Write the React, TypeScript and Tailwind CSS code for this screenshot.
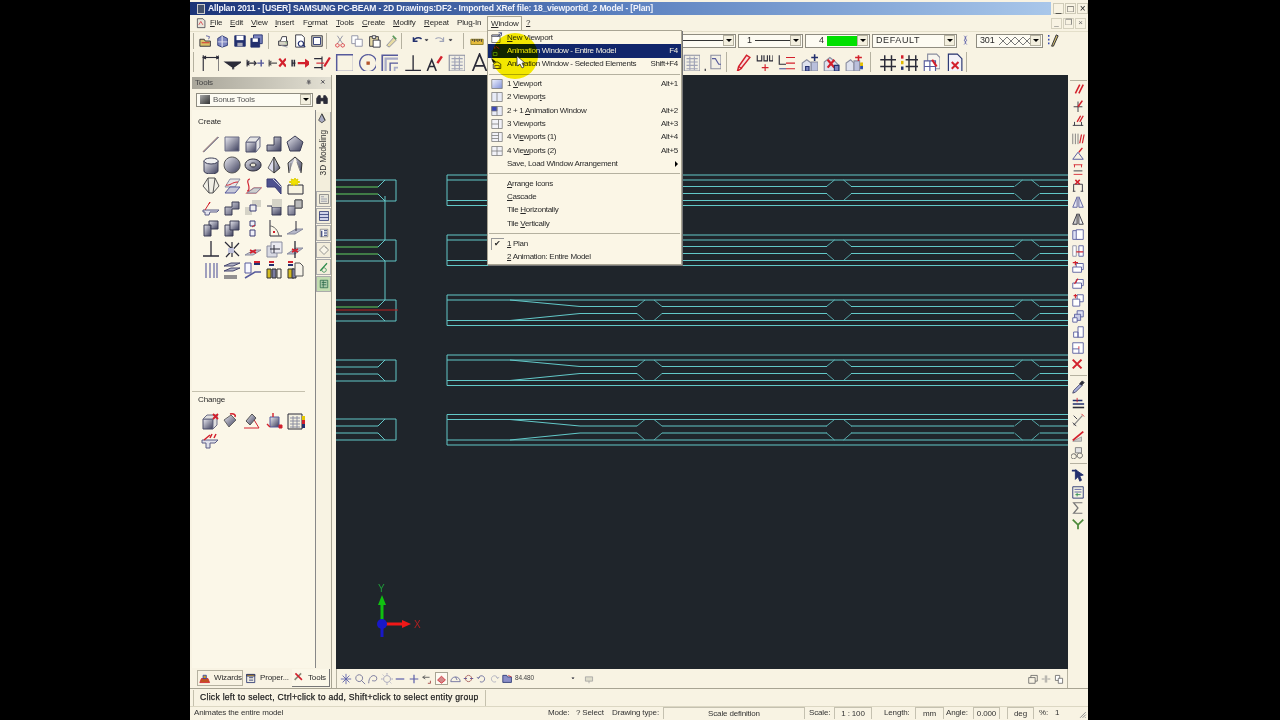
import React from "react";

type P = [string, string?, string?, number?];
const K = "#2b2b38", B = "#565a9c", R = "#d3202c", G = "#8a8da0", Y = "#d8c36a", N = "#23306e";
const D = "url(#sh)";

function Ic({ p, s = 16, v = 16 }: { p: P[]; s?: number; v?: number }) {
  return (
    <svg width={s} height={s} viewBox={`0 0 ${v} ${v}`} className="shrink-0">
      {p.map((x, i) => (
        <path key={i} d={x[0]} stroke={x[1] ?? K} fill={x[2] ?? "none"} strokeWidth={x[3] ?? 1} />
      ))}
    </svg>
  );
}

function U({ s }: { s: string }) {
  const i = s.indexOf("&");
  if (i < 0) return <>{s}</>;
  return (
    <>
      {s.slice(0, i)}
      <span className="underline">{s[i + 1]}</span>
      {s.slice(i + 2)}
    </>
  );
}

const tb1a: P[][] = [
  [["M1 6h5l1 2h6v6H1z", K, Y], ["M8 2l4 1-1 3", B], ["M3 10h9", R]],
  [["M2 5l5-3 6 3v8l-6 2-5-2z", N, "#7e86c0"], ["M7 2v13", "#fff"], ["M2 9h11", "#dde"]],
  [["M2 2h12v12H2z", N, N], ["M4 2h8v5H4z", "none", "#fff"], ["M5 10h6v4H5z", "none", "#aab"]],
  [["M4 1h10v10H4z", N, "#7e86c0"], ["M1 5h10v10H1z", N, N], ["M3 5h6v4H3z", "none", "#fff"]],
];
const tb1b: P[][] = [
  [["M3 8h10v5H3z", K, "#d9d6c8"], ["M5 8l2-5h5v5", K, "#fff"], ["M6 13l7 2", G], ["M11 10h1", "#3a3"]],
  [["M3 1h7l3 3v11H3z", K, "#fff"], ["M9 8a3 3 0 1 0 .1 0M11 12l3 3", N, "none", 1.4]],
  [["M2 2h12v12H2z", K, "#d9d6c8"], ["M4 4h8v8H4z", N, "#fff"]],
];
const tb1c: P[][] = [
  [["M11 2L5 11M5 2l6 9", G], ["M5 11a2 2 0 1 0 .1 0M11 11a2 2 0 1 0 .1 0", R]],
  [["M2 2h7v9H2z", G, "#fff"], ["M6 6h8v8H6z", G, "#fff"]],
  [["M3 3h10v11H3z", K, "#e6d9a8"], ["M6 2h4v3H6z", K, "#fff"], ["M7 7h8v8H7z", K, "#fff"]],
  [["M3 13l8-9 3 3-8 8z", G, "#e7dba2"], ["M10 2l4 4", "#5a9a5a", "none", 2]],
];
const undo: P[] = [["M3 9a6 5 0 0 1 10-3M3 4v5h5", N, "none", 1.8]];
const redo: P[] = [["M13 9a6 5 0 0 0-10-3M13 4v5H8", "#a0a4b8", "none", 1.4]];
const arrow: P[] = [["M2 6h5l-2.5 3z", K, K]];
const ruler: P[] = [["M1 6h14v6H1z", "#8c7a1f", "#e5bb3c"], ["M3 6v2M5 6v3M7 6v2M9 6v3M11 6v2M13 6v3", K]];

const t2: P[][] = [
  [["M2 2v15M16 2v15", K], ["M2 4h14", K], ["M2 4l2-1v2zM16 4l-2-1v2z", K, K]],
  [["M2 8h14l-7 5z", K, K], ["M8 14h2", K]],
  [["M1 6v6M1 9h8M3 7l-2 2 2 2M7 7l2 2-2 2", K], ["M10 9h7M13.5 6v6", B, "none", 1.3]],
  [["M1 6v6M1 9h7M3 7l-2 2 2 2", "#555"], ["M10 5l6 7M16 5l-6 7", R, "none", 2]],
  [["M1 6v6M3 6v6M1 9h3", K, "none", 1.3], ["M6 9h9", R, "none", 2], ["M13 6l4 3-4 3z", R, R]],
  [["M1 5h7M1 13h7M8 3v12", K], ["M10 12l5-8", R, "none", 2], ["M3 9h7", R]],
  [["M1.5 1.5h15v15h-15z", B, "none", 1.3]],
  [["M9 1.5a7.5 7.5 0 1 0 .1 0", B, "none", 1.2], ["M8 8h2v2H8z", "#b4552c", "#b4552c"]],
  [["M2 17V2h14", B, "none", 1.5], ["M5 17V5h11", "#a8abc8", "none", 2], ["M9 17V9h7", B, "none", 1.2], ["M13 17v-4h3", "#a8abc8", "none", 1.5]],
  [["M9 2v13M2 15.5h14", K, "none", 1.2]],
  [["M2 16L6 6l4 10M3.5 12h5", K, "none", 1.4], ["M11 9l4-6", R, "none", 2.2]],
  [["M2 2h14v14H2z", G, "#f2efe4"], ["M4 5h10M4 8h10M4 11h10M4 14h10M7 3v12M11 3v12", "#a0a3b6"]],
];
const bigA: P[] = [["M2 17L8.5 1 15 17M4.5 11.5h8", K, "none", 1.5]];
const t2b: P[][] = [
  [["M2 2h14v14H2z", G, "#f2efe4"], ["M4 5h10M4 8h10M4 11h10M4 14h10M7 3v12M11 3v12", "#a0a3b6"]],
  [["M7 2h9v12H7z", G, "#f2efe4"], ["M8 5h3l3 5h2", B], ["M2 14v3h3", K]],
];
const t2c: P[][] = [
  [["M4 16l1-4 7-10 3 2-8 10z", R, "#f7dede", 1.3], ["M5 12l3 2", R]],
  [["M2 2v5h4V2M8 2v5h3V2M13 2v5h3V2", K], ["M9 10v6M6 13h6", R]],
  [["M2 2v8h6", K], ["M8 4h8M8 9h8M8 14h8", R], ["M2 14h6", B]],
  [["M2 16V9l4-3 4 3v7z", G, "#dfe2ee"], ["M5 12h3v4H5z", N, "#7e86c0"], ["M10 16V8h6v8z", G, "#b9bfdc"], ["M10 4h6M13 1v6", N, "none", 1.4]],
  [["M2 16V8l5-4 5 4 3 3v5z", G, "#dfe2ee"], ["M5 6l6 7M11 6l-6 7", R, "none", 2], ["M11 11h4v5h-4z", N, "#7e86c0"]],
  [["M1 16V9l4-3 3 3v7z", G, "#dfe2ee"], ["M8 16V7h5v9z", G, "#b9bfdc"], ["M12 2v5M9 4h6", R, "none", 1.4], ["M14 9h3v2h-3z", "#d8b400", "#f0d000"], ["M14 12h3v2h-3z", "#2a4ab0", "#2a4ab0"]],
];
const t2d: P[][] = [
  [["M6 2v14M12 2v14M2 6h14M2 12h14", K, "none", 1.3]],
  [["M8 2v14M14 2v14M5 6h13M5 12h13", K, "none", 1.3], ["M2 2v3", R, "none", 2.2], ["M2 7v3", "#e0b800", "none", 2.2], ["M2 12v3", N, "none", 2.2]],
  [["M5 1h8l3 3v10H5z", G, "#f7f5ee"], ["M2 7h10v10H2z", B, "#fff"], ["M7 7v10M2 12h10", B], ["M9 6l4 6", R, "none", 2]],
  [["M3 1h8l4 4v12H3z", N, "#f3f2f8"], ["M6 8l6 6M12 8l-6 6", R, "none", 1.8]],
];

const grid: P[][] = [
  [["M1 17L16 2", "#a08888", "none", 1.4], ["M2 17L17 2", G, "none", 1]],
  [["M2 2h14v14H2z", "#6a6c85", D]],
  [["M2 7h10v10H2z", "#4a4c68", D], ["M2 7l4-5h10l-4 5zM12 7l4-5v10l-4 5z", "#6a6c85", "#e6e6e6"]],
  [["M2 10h7V2h7v14H2z", "#3b3d55", D]],
  [["M9 1l8 6-3 9H4L1 7z", "#3b3d55", D]],
  [["M2 5v10a7 3 0 0 0 14 0V5z", "#3b3d55", D], ["M9 2a7 3 0 1 0 .1 0", "#3b3d55", "#f0f0f0"]],
  [["M9 1a8 8 0 1 0 .1 0", "#555", D]],
  [["M9 3a8 6 0 1 0 .1 0", "#2b2b38", D], ["M9 7a3 2 0 1 0 .1 0", "#2b2b38", "#e8e4d4"]],
  [["M9 1L3 12l6 5z", "#666", "#dde"], ["M9 1l6 11-6 5z", "#333", D]],
  [["M9 1l7 6-1 10M9 1L2 7l1 10", "#333", D], ["M5 7l-1 8M11 6l3 9", "#888"]],
  [["M6 1h7l4 8-6 7H7L1 9z", "#555", "#f0efe6"], ["M6 1L7 16M13 1l-2 15", "#555", "#aaa"]],
  [["M2 10l5-8h10l-5 8z", G, "#e6e6e6"], ["M2 16l5-6h10l-5 6z", B, "#c6c8d8"], ["M3 8c4 1 6-3 12-3", R]],
  [["M3 14c3 0 2-5 1-8s1-4 2-4M3 16l7-5h7l-5 5z", R, "#e5e5e5", 1.1], ["M3 16l7-5h7l-5 5z", G, "#cfcfcf"]],
  [["M2 2h8l6 7v8l-6-7H2z", "#3b3d75", "#4e5290"], ["M8 2l8 8", "#cfd0e0"]],
  [["M2 8h15v9H2z", K, "#f7f3e1"], ["M9 1l1 2 2-1-1 2 3 1-3 1 1 2-3-1-1 2-1-2-2 1 1-2-3-1 3-1-1-2 3 1z", "#e0d000", "#f2e300"]],
  [["M1 12h16l-2 2H8l-1 3H3v-3H1z", "#5a5c85", "#e5e5ee"], ["M3 12l5-8", R], ["M8 4l-1 2", R]],
  [["M2 9h7V4h7v7H9v6H2z", "#3b3d55", D]],
  [["M1 9h7v8H1zM8 2h9v7H8z", "none", "#d5d3c7"], ["M6 7h6v6H6z", "#3b3d75", "#eee"]],
  [["M2 8h5v9h9V9H7", "#3b3d55", D], ["M7 1h10v8H7z", "none", "#d5d3c7"]],
  [["M2 8h7V2h7v8H9v7H2z", "#3b3d55", D], ["M9 2h7v8H9z", "#555", "#bbb"]],
  [["M2 6h7v11H2z", "#3b3d55", D], ["M7 2h9v8H9v-4H7z", "#3b3d55", D]],
  [["M2 6h8v11H2z", "#3b3d55", D], ["M7 2h9v9H7z", "#3b3d55", D]],
  [["M6 2h5v5H6zM6 11h5v6H6z", "#3b3d75", "#f0f0f8"], ["M8 8l3-2", R]],
  [["M5 1v16h12", K], ["M5 7c4 0 8 4 9 10", "#666"], ["M8 13h2", R, "none", 2]],
  [["M1 15l9-5h7l-8 5z", G, "#b5b7c8"], ["M10 2v10", K]],
  [["M9 1v15M1 16h16", K, "none", 1.3]],
  [["M2 2l14 14M16 3L3 17M9 2v15", K, "none", 1.2], ["M5 8h6v5H5z", "none", "#c0c2dc"]],
  [["M1 15l9-5h7l-8 5z", G, "#c8c8d0"], ["M6 10l6 3M6 13l6-3", R, "none", 1.8]],
  [["M2 6h10v11H2z", G, "#d8d9e2"], ["M6 2h11v11H6z", G, "#eaeaf0"], ["M9 5v8M5 9h10", K]],
  [["M1 14l9-6h7l-8 6z", G, "#b5b7c8"], ["M9 1v17", K, "none", 1.3], ["M6 9l6 3M6 12l6-3", R, "none", 1.6]],
  [["M4 2v15M8 2v15M12 2v15M15 2v15", B, "none", 1.1]],
  [["M1 5l7-3h9l-7 3zM1 10l7-3h9l-7 3z", "#44446c", "#b5b7c8"], ["M1 15h13", K], ["M1 17h13", K]],
  [["M1 2h6v10H1z", B, "#f8f8ff"], ["M1 17l10-6h6", B, "none", 1.5], ["M10 1h6", R, "none", 2], ["M10 3h6", N, "none", 2]],
  [["M2 8h4v9H2z", "#333", "#d4bc20"], ["M7 8h4v9H7z", "#333", "#7a7ca0"], ["M12 8h4v9h-4z", "#333", "#f6f3e8"], ["M4 1h5", R, "none", 2], ["M4 4h5", N, "none", 2]],
  [["M2 8h6v9H2z", "#333", "#d4bc20"], ["M6 8h4v9H6z", "#333", "#7a7ca0"], ["M9 2h5l3 3v10H9z", "#555", "#f6f3e8"], ["M2 1h5", R, "none", 2], ["M2 4h5", N, "none", 2]],
];
const change: P[][] = [
  [["M2 7h10v10H2z", "#4a4c68", D], ["M2 7l4-4h10l-4 4zM12 7l4-4v10l-4 4z", "#6a6c85", "#dedede"], ["M12 2l5 5M17 2l-5 5", R, "none", 1.8]],
  [["M3 8l7-5 5 5-7 7z", "#666", D], ["M9 2c4-1 6 1 5 3", R, "none", 1.6]],
  [["M1 16h15L10 6", R], ["M3 9l6-7 4 4-6 7z", "#555", D]],
  [["M5 5h9v10H5z", B, D], ["M8 1v4M2 12l3 3", R, "none", 1.4], ["M14 13h3v3h-3z", R, R]],
  [["M1 2h14v15H1z", K, "#f3f0e0"], ["M3 6h10M3 9h10M3 12h10M3 15h10M6 4v12M10 4v12", G], ["M15 4h3v4h-3z", "none", "#e6c800"], ["M15 8h3v4h-3z", "none", R], ["M15 12h3v4h-3z", "none", N]],
  [["M1 8h16l-3 3H9v5H5v-5H1z", "#5a5c85", "#dfe0ea"], ["M3 8l6-5M11 2l-2 4M15 2l-2 4", R, "none", 1.5]],
];
const rightIcons: P[][] = [
  [["M5 13l5-10", R, "none", 1.8], ["M9 13l5-10", R, "none", 1.8]],
  [["M3 10h10M8 4v12", K], ["M8 10l5-7", R, "none", 1.8]],
  [["M2 13h12M4 13V9M12 13V9", K], ["M7 9l4-7M10 9l4-7", R, "none", 1.5]],
  [["M2 3v12M5 3v12M8 3v12", "#777"], ["M10 14l2-10M13 14l2-10", R, "none", 1.4]],
  [["M2 14h12L8 6z", B, "none", 1.1], ["M9 6l4-5", R, "none", 1.6]],
  [["M3 2h10M3 13h10M4 2v3M12 2v3", R], ["M3 9h10", K]],
  [["M3 14V6h10v8M2 14h3M11 14h3", K], ["M5 1l5 5M10 1L5 6", R, "none", 1.8]],
  [["M7 2L2 14h5zM9 2l5 12H9z", B, "#e8e8f2"]],
  [["M7 2L2 14h5z", K, "#ccc"], ["M9 2l5 12H9z", K, "#f4f4f4"]],
  [["M2 3h8v10H2z", B, "#dfe2f4"], ["M6 2h8v11H6z", B, "#fff"]],
  [["M2 2h4v12H2z", G, "#fff"], ["M9 2h5v12H9z", B, "#fff"], ["M6 9h8", R, "none", 1.4]],
  [["M6 4h8v7H6z", B, "#fff"], ["M2 8h10v6H2z", B, "#fff"], ["M5 1v5M2 3h6", R, "none", 1.3]],
  [["M6 4h8v7H6z", B, "#fff"], ["M2 8h10v6H2z", B, "#fff"], ["M4 9l4-6", R, "none", 1.3]],
  [["M7 2h7v8H7z", B, "#fff"], ["M2 7h8v8H2z", B, "#fff"], ["M5 1v5M3 3h4", R, "none", 1.2]],
  [["M7 2h7v7H7z", B, "#dfe2f4"], ["M4 6h7v7H4z", B, "#c7cbe6"], ["M2 10h5v5H2z", B, "#fff"]],
  [["M3 8h5v6H3zM8 2h6v12H8z", B, "#fff"]],
  [["M2 2h12v12H2z", B, "#fff"], ["M2 9h7v5", B], ["M9 6v3", R]],
  [["M2 3l10 10M12 3L2 13", R, "none", 2.4]],
  [["M2 15l3-1 8-8-2-2-8 8z", "#446", "#a9b0dc"], ["M10 4l3-3 2 2-3 3z", K, K]],
  [["M2 4h11M2 8h13", N, "none", 1.8], ["M2 12h13", K, "none", 1.8], ["M7 1v5", R]],
  [["M3 14L13 3", "#888", "none", 1.3], ["M2 11l4 4M3 3l4 4", K], ["M12 1l3 3", R]],
  [["M2 14h10V9z", "#999", "#cfcfcf"], ["M2 13L14 3", R, "none", 2.2]],
  [["M3 10a3 3 0 1 0 .1 0M10 9a3 3 0 1 0 .1 0", "#555"], ["M5 3h7v6H5z", "#777", "#e3e3e3"]],
  [["M1 3h6", N, "none", 2], ["M5 2l9 6-4 1 2 5-2 1-2-5-3 3z", N, N]],
  [["M2 2h12v13H2z", N, "#f3f2e2"], ["M4 5h8M4 8h8", B], ["M5 11h6M7 9v4", "#2a8a4a"]],
  [["M13 2H3l5 6-5 6h10", "#777", "none", 1.4]],
  [["M2 3l6 6 6-6M8 9v5", "#4d8a3a", "none", 2]],
];

const menuIcons: Record<string, P[]> = {
  nv: [["M1 4h11v10H1z", "#555", "#fff"], ["M1 4h11v2H1z", "#555", "#c0c6e8"], ["M10 1h4v4", N], ["M14 1L9 6", N]],
  an: [["M1 8l5-3 4 3v6H1z", "#222", "none"], ["M3 10h5v4H3z", "#6a3", "none"], ["M7 2l4 3M5 2v3", R]],
  an2: [["M1 1l5 4-3 1z", "#111", "#111"], ["M3 8l5-3 5 3v6H3z", "#222", "none"], ["M5 10h6v4H5z", "#542", "none"]],
  v1: [["M1 2h14v12H1z", "#777", "url(#vp)"]],
  v2: [["M1 2h14v12H1z", "#777", "#e8ebf8"], ["M8 2v12", "#777"]],
  v21: [["M1 2h14v12H1z", "#777", "#e8ebf8"], ["M1 2h7v6H1z", "#777", "#3c48b8"], ["M8 2v12", "#777"]],
  v3: [["M1 2h14v12H1z", "#777", "#f2f2f8"], ["M10 2v12M1 8h9", "#777"]],
  v41: [["M1 2h14v12H1z", "#777", "#f2f2f8"], ["M10 2v12M1 6h9M1 10h9", "#777"]],
  v42: [["M1 2h14v12H1z", "#777", "#f2f2f8"], ["M8 2v12M1 8h14", "#777"]],
};

type Row = { t?: string; k?: string; i?: string; sep?: boolean; active?: boolean; sub?: boolean; chk?: boolean };
const rows: Row[] = [
  { t: "&New Viewport", i: "nv" },
  { t: "Animation Window - Entire Model", k: "F4", i: "an", active: true },
  { t: "Animation Window - Selected Elements", k: "Shift+F4", i: "an2" },
  { sep: true },
  { t: "1 &Viewport", k: "Alt+1", i: "v1" },
  { t: "2 Viewpor&ts", i: "v2" },
  { t: "2 + 1 &Animation Window", k: "Alt+2", i: "v21" },
  { t: "3 Viewports", k: "Alt+3", i: "v3" },
  { t: "4 Vi&ewports (1)", k: "Alt+4", i: "v41" },
  { t: "4 Vie&wports (2)", k: "Alt+5", i: "v42" },
  { t: "Save, Load Window Arrangement", sub: true },
  { sep: true },
  { t: "&Arrange Icons" },
  { t: "&Cascade" },
  { t: "Tile &Horizontally" },
  { t: "Tile &Vertically" },
  { sep: true },
  { t: "&1 Plan", chk: true },
  { t: "&2 Animation: Entire Model" },
];

const menus: [string, string][] = [
  ["&File", "w-[20px]"], ["&Edit", "w-[21px]"], ["&View", "w-[24px]"], ["&Insert", "w-[28px]"], ["F&ormat", "w-[33px]"],
  ["&Tools", "w-[26px]"], ["&Create", "w-[31px]"], ["&Modify", "w-[31px]"], ["&Repeat", "w-[33px]"], ["Plu&g-In", "w-[30px]"],
];

const T = [176, 236, 296, 356, 415.5];
const C = "#62c8c8";
function Beam({ t }: { t: number }) {
  const hex = [649.5, 839, 1027];
  const o = [t + 5, t + 11.5, t + 18.5, t + 25.5];
  const segs = [[580, 637], [662, 827], [851, 1014], [1040, 1068]];
  return (
    <g stroke={C} fill="none" strokeWidth={1}>
      <path d={`M1068 ${t}H447V${t + 30.5}H1068M447 ${o[0]}H1068M447 ${o[3]}H1068`} />
      <path d={`M510 ${o[0]}L580 ${o[1]}M510 ${o[3]}L580 ${o[2]}`} strokeWidth={1.1} />
      {segs.map((s) => (
        <path key={s[0]} d={`M${s[0]} ${o[1]}H${s[1]}M${s[0]} ${o[2]}H${s[1]}`} />
      ))}
      {hex.map((c) => (
        <path key={c} strokeWidth={0.8} d={`M${c - 12.5} ${o[1]}L${c - 4.5} ${o[0]}M${c + 4.5} ${o[0]}L${c + 12.5} ${o[1]}M${c - 12.5} ${o[2]}L${c - 4.5} ${o[3]}M${c + 4.5} ${o[3]}L${c + 12.5} ${o[2]}`} />
      ))}
    </g>
  );
}
function Stub({ t, a, b }: { t: number; a: string; b: string }) {
  return (
    <g fill="none" strokeWidth={1}>
      <path stroke={C} d={`M336 ${t}H396V${t + 21}H336`} />
      <path stroke={a} d={`M336 ${t + 7}H378`} />
      <path stroke={C} d={`M378 ${t + 7}L385 ${t}`} />
      <path stroke={b} d={`M336 ${t + 14}H378`} />
      <path stroke={C} d={`M378 ${t + 14}L385 ${t + 21}`} />
    </g>
  );
}

function Canvas() {
  return (
    <svg viewBox="336 76 732 594" className="block h-[594px] w-[732px]">
      {T.map((t) => <Beam key={t} t={t} />)}
      <Stub t={181} a="#62d262" b="#62d262" />
      <Stub t={241} a="#62d262" b="#62d262" />
      <Stub t={301} a="#62d262" b={C} />
      <Stub t={361} a={C} b={C} />
      <Stub t={420} a={C} b={C} />
      <path d="M385 197V241M385 262V301" stroke={C} fill="none" />
      <path d="M336 311H398" stroke="#c02020" fill="none" />
      <path d="M382 625V605" stroke="#10c010" strokeWidth={3} />
      <path d="M378 606L382 596L386 606Z" fill="#10c010" />
      <path d="M382 625H403" stroke="#f01818" strokeWidth={3} />
      <path d="M402 621L411 625L402 629Z" fill="#f01818" />
      <path d="M382 625V638" stroke="#1818c8" strokeWidth={3} />
      <circle cx={382} cy={625} r={5} fill="#1818c8" />
      <text x={378} y={593} fill="#1f9a3a" fontSize={10} fontFamily="Liberation Sans, sans-serif">Y</text>
      <text x={414} y={629} fill="#b02020" fontSize={10} fontFamily="Liberation Sans, sans-serif">X</text>
    </svg>
  );
}

function Sep({ h = "h-[16px]", cl = "" }: { h?: string; cl?: string }) {
  return <div className={`w-px shrink-0 bg-[#b5b1a0] ${h} ${cl}`} />;
}
function Combo({ w, cl = "", children }: { w: string; cl?: string; children: React.ReactNode }) {
  return (
    <div className={`flex h-[14px] shrink-0 items-center justify-between border border-[#8f8c80] bg-[#fdfbf2] pl-[3px] pr-px text-[9px] ${w} ${cl}`}>
      <div className="flex min-w-0 flex-1 items-center gap-[3px] overflow-hidden">{children}</div>
      <div className="flex h-[11px] w-[11px] shrink-0 items-center justify-center border border-[#b5b1a0] bg-[#f3efde]">
        <div className="h-0 w-0 border-x-[3px] border-t-[3px] border-x-transparent border-t-black" />
      </div>
    </div>
  );
}
function Field({ w, children, cl = "" }: { w: string; children?: React.ReactNode; cl?: string }) {
  return <div className={`flex h-[12px] shrink-0 items-center justify-center whitespace-nowrap border border-b-0 border-[#c5c1b0] ${w} ${cl}`}>{children}</div>;
}

const tabs: P[][] = [
  [["M2 2h12v12H2z", "#777", "#e8e6da"], ["M4 5h4M4 8h8M4 11h8", G]],
  [["M2 2h12v12H2z", N, "#cfd3ea"], ["M2 6h12M2 10h12", N]],
  [["M3 3h10v10H3z", "#777", "#fff"], ["M5 5v8M8 5h4M8 8h4M8 11h4", N, "none", 1.5]],
  [["M2 8l6-6 6 6-6 6z", "#777", "#f8f5e8"], ["M10 4l2 2", "#777"]],
  [["M3 13L12 3", "#2a8a4a", "none", 1.5], ["M8 9a3 3 0 1 0 .1 0", "#2a8a4a"]],
  [["M3 3h10v10H3z", "#2a6a4a", "#aac8a8"], ["M5 6h6M5 9h6M7 3v10", "#2a6a4a"]],
];
const bar: P[][] = [
  [["M7 1v12M1 7h12M3 3l8 8M11 3l-8 8", "#5a5ea8"]],
  [["M6 2a4 4 0 1 0 .1 0M9 9l4 4", "#6a6c95"]],
  [["M2 12c0-6 3-9 6-9s4 3 3 5-3 1-5 1", "#6a6c95"]],
  [["M7 3a4 4 0 1 0 .1 0M7 0v2M7 12v2M0 7h2M12 7h2M2 2l1 1M11 11l1 1", "#9a9cb5"]],
  [["M2 7h10", "#5a5ea8", "none", 1.4]],
  [["M2 7h10M7 2v10", "#5a5ea8", "none", 1.4]],
  [["M2 5h8M2 5l3-2M2 5l3 2", "#555"], ["M11 9v3h-3", "#a04040"]],
];
const bar2: P[][] = [
  [["M2 9l5-5 5 5-5 4z", R, "#d28a8a"]],
  [["M1 11a6 6 0 0 1 12 0zM7 5l2 4", "#5a5e95"]],
  [["M1 7h4M9 7h4", "#5a5ea8", "none", 1.4], ["M7 3a4 4 0 1 0 .1 0", "#a05050"]],
  [["M3 7a4 4 0 1 1 2 4M1 5l2 2 2-2", "#5a5e95"]],
  [["M11 7a4 4 0 1 0-2 4M13 5l-2 2-2-2", "#a8aabc"]],
  [["M1 3h5l1 2h5v7H1z", N, "#8a8ec8"], ["M8 3l4 2", R]],
];

export default function App() {
  return (
    <div className="flex h-[720px] w-[1280px] overflow-hidden bg-black font-['Liberation_Sans',sans-serif] text-[8px] leading-none tracking-[-0.15px] text-[#2a2a2a] blur-[0.4px]">
      <svg width="0" height="0" className="shrink-0">
        <defs>
          <linearGradient id="sh" x1="0" x2="1" y1="0" y2="1">
            <stop offset="0" stopColor="#ececf2" />
            <stop offset="1" stopColor="#3a3c5a" />
          </linearGradient>
          <linearGradient id="vp" x1="0" x2="1" y1="0" y2="1">
            <stop offset="0" stopColor="#f2f4ff" />
            <stop offset="1" stopColor="#7f90d8" />
          </linearGradient>
        </defs>
      </svg>
      <div className="w-[190px] shrink-0" />
      <div className="relative flex w-[898px] shrink-0 flex-col bg-[#f8f3e3]">
        {/* title */}
        <div className="flex h-[15px] shrink-0 items-end">
          <div className="flex h-[13px] w-[862px] items-center gap-[3px] bg-gradient-to-r from-[#1c3478] via-[#5b80bf] to-[#a9c7ea] pl-[7px] text-[8.6px] font-bold tracking-[-0.2px] text-[#f0f2fa]">
            <div className="h-[10px] w-[8px] border border-[#ccc] bg-[#44506a]" />
            <span className="whitespace-nowrap">Allplan 2011 - [USER] SAMSUNG PC-BEAM - 2D Drawings:DF2 - Imported XRef file: 18_viewportid_2 Model - [Plan]</span>
          </div>
          <div className="ml-[2px] flex h-[13px] items-center gap-px">
            {["_", "□", "×"].map((c) => (
              <div key={c} className="flex h-[11px] w-[11px] items-center justify-center border border-[#cfcbb8] text-[10px] text-[#222]">{c}</div>
            ))}
          </div>
        </div>
        {/* menu */}
        <div className="flex h-[16px] shrink-0 items-center pl-[6px]">
          <div className="w-[14px]"><Ic s={11} p={[["M2 1h8l3 3v10H2z", K, "#e8e6da"], ["M4 10l3-5 3 5", R]]} /></div>
          {menus.map(([m, w]) => <span key={m} className={`${w} shrink-0`}><U s={m} /></span>)}
          <span className="flex h-[14px] w-[35px] shrink-0 items-center border border-b-0 border-[#a8a493] bg-[#fbf7e8] pl-[3px]"><U s="&Window" /></span>
          <span className="ml-[4px]"><U s="&?" /></span>
          <div className="ml-auto mr-[2px] flex gap-px text-[#666]">
            {["_", "❐", "×"].map((c) => (
              <div key={c} className="flex h-[11px] w-[11px] items-center justify-center border border-[#d5d1be] text-[8px]">{c}</div>
            ))}
          </div>
        </div>
        {/* toolbar 1 */}
        <div className="flex h-[18px] shrink-0 items-center border-t border-[#e4dfca] pl-[3px]">
          <Sep cl="mr-[5px]" />
          <div className="flex gap-[3px]">{tb1a.map((p, i) => <Ic key={i} p={p} s={14} />)}</div>
          <Sep cl="ml-[4px] mr-[7px]" />
          <div className="flex gap-[3px]">{tb1b.map((p, i) => <Ic key={i} p={p} s={14} />)}</div>
          <Sep cl="ml-[2px] mr-[6px]" />
          <div className="flex gap-[3px]">{tb1c.map((p, i) => <Ic key={i} p={p} s={14} />)}</div>
          <Sep cl="ml-[3px] mr-[9px]" />
          <Ic p={undo} s={13} /><Ic p={arrow} s={9} /><Ic p={redo} s={13} /><div className="ml-[2px]"><Ic p={arrow} s={9} /></div>
          <Sep cl="ml-[6px] mr-[6px]" />
          <Ic p={ruler} s={14} />
          <Combo w="w-[73px]" cl="ml-[179px]"><span>25</span><div className="h-px flex-1 bg-[#333]" /></Combo>
          <Combo w="w-[65px]" cl="ml-[2px]"><span className="ml-[5px]">1</span><div className="h-px flex-1 bg-[#333]" /></Combo>
          <Combo w="w-[65px]" cl="ml-[2px]"><span className="ml-[10px]">4</span><div className="h-[10px] flex-1 bg-[#00e000]" /></Combo>
          <Combo w="w-[85px]" cl="ml-[2px]"><span className="tracking-[0.6px]">DEFAULT</span></Combo>
          <div className="mx-[1px] w-[16px]"><Ic s={14} p={[["M7 2a3 3 0 0 1 0 5 3 3 0 0 1 0 5M10 2a3 3 0 0 0 0 5 3 3 0 0 0 0 5", "#5a5ea8"]]} /></div>
          <Combo w="w-[67px]" cl="ml-[1px]"><span>301</span><Ic s={36} v={36} p={[["M1 14l8 8 8-8 8 8 8-8M1 22l8-8 8 8 8-8 8 8", "#777"]]} /></Combo>
          <div className="ml-[2px]"><Ic s={15} p={[["M4 2v2M4 6v2M4 10v2", "#2a40b0", "none", 1.5], ["M7 14l5-12 2 1-5 11z", K, "#d8c36a"]]} /></div>
        </div>
        {/* toolbar 2 */}
        <div className="flex h-[26px] shrink-0 items-center pb-[1px] pl-[3px]">
          <Sep h="h-[20px]" cl="mr-[7px]" />
          <div className="flex items-center gap-[4.4px]">
            {t2.map((p, i) => <Ic key={i} p={p} s={18} />)}
            <Ic p={bigA} s={18} />
          </div>
          <div className="ml-[194px] flex gap-[3px]">{t2b.map((p, i) => <Ic key={i} p={p} s={18} />)}</div>
          <Sep h="h-[20px]" cl="ml-[5px] mr-[6px]" />
          <div className="flex gap-[4.4px]">{t2c.map((p, i) => <Ic key={i} p={p} s={18} />)}</div>
          <Sep h="h-[20px]" cl="ml-[7px] mr-[7px]" />
          <div className="flex gap-[4.4px]">{t2d.map((p, i) => <Ic key={i} p={p} s={18} />)}</div>
          <Sep h="h-[20px]" cl="ml-[3px]" />
        </div>
        {/* main */}
        <div className="flex h-[613px] shrink-0">
          {/* tools panel */}
          <div className="ml-[2px] flex w-[140px] shrink-0 flex-col border-r border-[#a8a493]">
            <div className="mt-[2px] flex h-[12px] shrink-0 items-center justify-between bg-gradient-to-r from-[#a9a69a] to-[#e3e0d3] pl-[3px] pr-[2px] text-[#444]">
              <span>Tools</span>
              <div className="flex items-center gap-[5px]">
                <Ic s={9} p={[["M5 1v6M3 2v3h4V2M1 7h8M5 7v3", K]]} />
                <Ic s={9} p={[["M2 2l6 6M8 2L2 8", K, "none", 1.4]]} />
              </div>
            </div>
            <div className="flex h-[21px] shrink-0 items-center pl-[4px]">
              <Combo w="w-[117px]"><div className="h-[9px] w-[10px] bg-gradient-to-br from-[#aaa] to-[#333]" /><span className="text-[8px] text-[#555]">Bonus Tools</span></Combo>
              <div className="ml-[2px]"><Ic s={14} p={[["M2 12V6l2-3h2v9zM14 12V6l-2-3h-2v9z", K, K], ["M6 6h4v3H6z", K, K]]} /></div>
            </div>
            <div className="flex min-h-0 flex-1">
              <div className="flex w-[124px] shrink-0 flex-col border-r border-[#888] bg-[#fbf7e8] pl-[6px]">
                <div className="mt-[8px] h-[9px]">Create</div>
                <div className="ml-[2px] mt-[6px] grid w-[105px] grid-cols-5">
                  {grid.map((p, i) => (
                    <div key={i} className="flex h-[21px] w-[21px] items-center justify-center"><Ic p={p} s={18} v={18} /></div>
                  ))}
                </div>
                <div className="-ml-[6px] mt-[111px] h-px w-[113px] bg-[#c5c1ae]" />
                <div className="mt-[4px] h-[9px]">Change</div>
                <div className="ml-[2px] mt-[7px] flex flex-wrap gap-y-[2px]">
                  {change.map((p, i) => (
                    <div key={i} className={`flex h-[18px] items-center justify-center ${i === 0 ? "w-[19px]" : i < 5 ? "w-[22px]" : "w-[19px]"}`}><Ic p={p} s={18} v={18} /></div>
                  ))}
                </div>
              </div>
              <div className="flex w-[15px] shrink-0 flex-col pt-[2px]">
                <div className="flex h-[79px] flex-col items-center gap-[4px] border-r border-[#aaa] bg-[#f3eedc] pt-[1px]">
                  <Ic s={13} p={[["M6 1L2 9l4 3 4-3z", "#444", "#a8aac0"], ["M6 1l4 8", "#333"]]} />
                  <span className="whitespace-nowrap [writing-mode:vertical-rl] rotate-180 text-[8.4px] text-[#333]">3D Modeling</span>
                </div>
                <div className="flex flex-col gap-[1px]">
                  {tabs.map((p, i) => (
                    <div key={i} className={`flex h-[16px] w-[15px] items-center justify-center border border-[#aaa] ${i === 5 ? "bg-[#c2dcb0]" : "bg-[#f3eedc]"}`}><Ic p={p} s={12} /></div>
                  ))}
                </div>
              </div>
            </div>
            <div className="flex h-[20px] shrink-0 items-center gap-[1px] pl-[5px]">
              <div className="flex h-[16px] w-[46px] items-center gap-[2px] border border-[#b5b1a0] px-[1px]"><Ic s={13} p={[["M1 13h12l-2-5H3z", R, "#c05020"], ["M5 4h4v4H5z", "#2a40b0", "#d8a020"]]} />Wizards</div>
              <div className="flex h-[16px] w-[47px] items-center gap-[2px] px-[1px]"><Ic s={13} p={[["M2 3h10v10H2z", N, "#f0ede0"], ["M2 3h10v2H2z", N, "#d8a020"], ["M5 7h5M5 10h5", N]]} />Proper...</div>
              <div className="flex h-[18px] w-[38px] items-center gap-[2px] border-b border-r border-[#777] bg-[#fbf7e8] px-[1px]"><Ic s={13} p={[["M2 11L10 3", "#887", "none", 2], ["M3 3l8 8", R, "none", 2]]} />Tools</div>
            </div>
          </div>
          {/* canvas */}
          <div className="ml-[4px] flex w-[732px] shrink-0 flex-col">
            <div className="h-[594px] shrink-0 bg-[#1f252b]"><Canvas /></div>
            <div className="flex h-[19px] shrink-0 items-center border-l border-r border-[#b5b1a0] pl-[3px]">
              <div className="flex items-center gap-[1.5px]">{bar.map((p, i) => <Ic key={i} p={p} s={12} v={14} />)}</div>
              <div className="ml-[2px] flex items-center gap-[2px]">
                {bar2.map((p, i) => <div key={i} className={i === 0 ? "border border-[#a8a493] bg-[#fdfbf2]" : ""}><Ic p={p} s={11} v={14} /></div>)}
              </div>
              <span className="ml-[2px] w-[56px] text-[6.5px] text-[#444]">84.480</span>
              <Ic p={arrow} s={7} />
              <div className="ml-[6px]"><Ic s={10} v={14} p={[["M2 4h10v6H2zM7 10v3", "#999", "#dedccb"]]} /></div>
              <div className="ml-auto mr-[3px] flex items-center gap-[3px]">
                <Ic s={10} v={14} p={[["M1 5h9v8H1zM4 5V2h9v8h-3", "#555"]]} />
                <Ic s={10} v={14} p={[["M1 7h4M9 7h4M6 2v10M8 2v10", "#888"]]} />
                <Ic s={10} v={14} p={[["M2 2h6v7H2z", "#555", "#fff"], ["M6 6h6v7H6z", "#555", "#fff"]]} />
              </div>
            </div>
          </div>
          {/* right toolbar */}
          <div className="flex w-[20px] shrink-0 flex-col items-center pt-[5px]">
            <div className="h-px w-[17px] bg-[#b5b1a0]" />
            {rightIcons.map((p, i) => (
              <React.Fragment key={i}>
                {(i === 18 || i === 23) && <div className="my-[3px] h-px w-[17px] bg-[#b5b1a0]" />}
                <div className="flex h-[16.2px] w-[20px] items-center justify-center"><Ic p={p} s={14} /></div>
              </React.Fragment>
            ))}
          </div>
        </div>
        {/* prompt */}
        <div className="flex h-[18px] shrink-0 items-center border-t border-[#a8a493] pl-[3px]">
          <div className="flex h-[16px] w-[293px] items-center border-l border-r border-[#c5c1ae] pl-[6px] text-[8.6px] tracking-[0.27px] text-[#222]">
            <span className="[-webkit-text-stroke:0.25px_#222]">Click left to select, Ctrl+click to add, Shift+click to select entity group</span>
          </div>
        </div>
        {/* status */}
        <div className="flex h-[13px] shrink-0 items-center border-t border-[#dcd7c3] pl-[4px] text-[#333]">
          <span className="w-[354px] shrink-0 whitespace-nowrap">Animates the entire model</span>
          <span className="w-[28px] shrink-0">Mode:</span>
          <span className="w-[36px] shrink-0 whitespace-nowrap">? Select</span>
          <span className="w-[51px] shrink-0 whitespace-nowrap">Drawing type:</span>
          <Field w="w-[142px]">Scale definition</Field>
          <span className="ml-[4px] w-[25px] shrink-0">Scale:</span>
          <Field w="w-[38px]">1 : 100</Field>
          <span className="ml-[12px] w-[31px] shrink-0">Length:</span>
          <Field w="w-[29px]">mm</Field>
          <span className="ml-[2px] w-[27px] shrink-0">Angle:</span>
          <Field w="w-[27px]">0.000</Field>
          <Field w="w-[27px]" cl="ml-[7px]">deg</Field>
          <span className="ml-[5px] w-[16px] shrink-0">%:</span>
          <span className="shrink-0">1</span>
          <div className="ml-auto mr-[1px] mt-[2px]"><Ic s={10} p={[["M14 5L5 14M14 9l-5 5M14 13l-1 1", "#888", "none", 1.5]]} /></div>
        </div>

        {/* window menu */}
        <div className="absolute left-[297px] top-[30px] z-10 flex w-[195px] flex-col border border-[#a8a493] bg-[#fbf6e6] tracking-[-0.3px] shadow-[1px_1px_0_#777]">
          {rows.map((r, i) =>
            r.sep ? (
              <div key={i} className="mx-[1px] my-[2.8px] h-px bg-[#b5b1a0]" />
            ) : (
              <div key={i} className={`flex h-[13.3px] items-center pr-[3px] ${r.active ? "bg-[#11266b] text-[#f4f0e0]" : ""}`}>
                <div className="flex w-[18px] shrink-0 items-center justify-center">
                  {r.i && <Ic p={menuIcons[r.i]} s={12} />}
                  {r.chk && <div className="flex h-[12px] w-[13px] items-center justify-center border-l border-t border-[#999] text-[8px]">✔</div>}
                </div>
                <span className="ml-[1px] whitespace-nowrap"><U s={r.t ?? ""} /></span>
                {r.k && <span className="ml-auto whitespace-nowrap">{r.k}</span>}
                {r.sub && <div className="ml-auto h-0 w-0 border-y-[3px] border-l-[3px] border-y-transparent border-l-black" />}
              </div>
            )
          )}
        </div>
        <div className="pointer-events-none absolute left-[302px] top-[33px] z-20 h-[46px] w-[46px] rounded-full bg-[#f7f000] mix-blend-multiply" />
        <div className="absolute left-[326px] top-[55px] z-30">
          <svg width="10" height="14" viewBox="0 0 10 14"><path d="M1 1v10l3-2 2 4 2-1-2-4h3z" fill="#fff" stroke="#222" strokeWidth="0.7" /></svg>
        </div>
      </div>
      <div className="flex-1" />
    </div>
  );
}
